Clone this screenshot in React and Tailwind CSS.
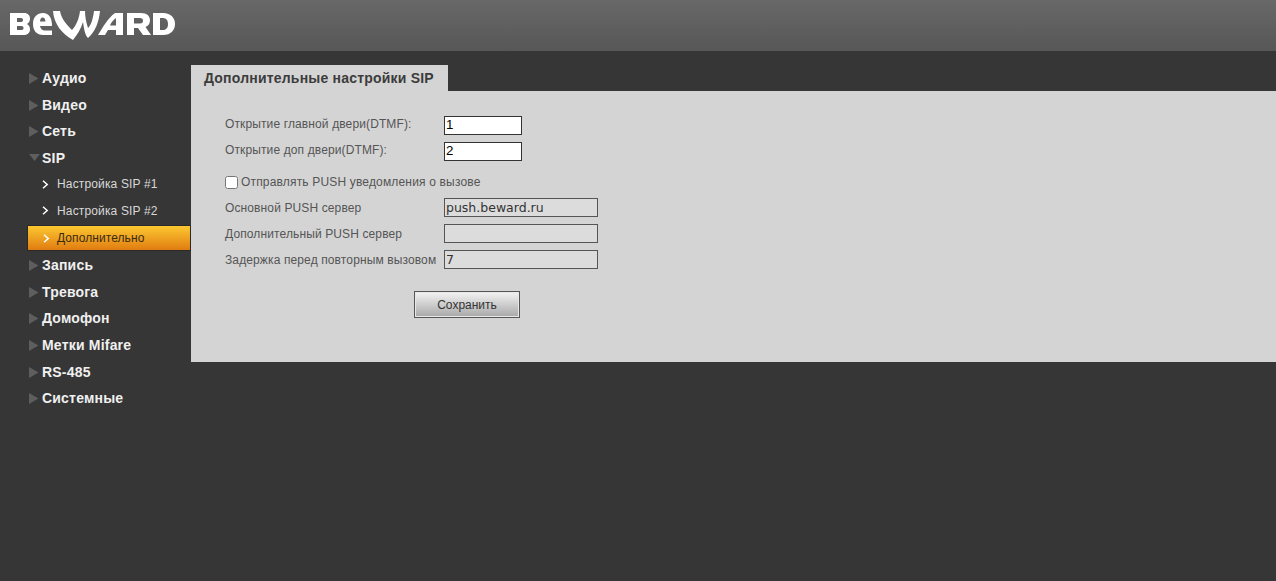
import { useState } from 'react';

function Logo() {
  return (
    <svg width="166" height="32" viewBox="0 0 166 32" fill="#fff" fillRule="evenodd" className="block">
      {/* B */}
      <path d="M0 3H14C18 3 20 5.500 20 8.500C20 11 19 13 17 14C19 15 20 17 20 19.500C20 23 17.500 25 13 25H0ZM7 8V12H11C12.500 12 13 11 13 10C13 9 12.500 8 11 8ZM7 16V20H11.500C13 20 13.500 19 13.500 18C13.500 17 13 16 11.500 16Z" />
      {/* e */}
      <path d="M33 3C39 3 42 8 42 16H30C30.500 18.500 32 20.500 35 20.500H42V25H33C27 25 23 21 23 14C23 7 27 3 33 3ZM30 11.500H35.500C35 9 34.500 7.500 32.700 7.500C31 7.500 30.300 9 30 11.500Z" />
      {/* W */}
      <path d="M43 1C44 14 52 24 63 30C67 25 71 19 73 12C74 19 75 25 78 28C85 22 89 12 90 1H84C83 9 81 15 78 18C76 12 75 6 75 1H70C69 9 66 16 62 20C56 14 51 8 50 1Z" />
      {/* A */}
      <path d="M88 25C93 17 98 8 105 3H113V25H106V20H98L95 25ZM106 15.500V8C103 10 101 13 100 15.500Z" />
      {/* R */}
      <path d="M117 3H131C137 3 140 6 140 10.500C140 14 138 16 135.500 17L141 25H133L128 18H124V25H117ZM124 8V13.500H130C132 13.500 133 12.500 133 10.700C133 9 132 8 130 8Z" />
      {/* D */}
      <path d="M143 3H153C161 3 165 8 165 14C165 20 161 25 153 25H143ZM150 8V20H152.500C156 20 158 18 158 14C158 10 156 8 152.500 8Z" />
    </svg>
  );
}

function Arrow({ open }) {
  return (
    <svg width="11" height="11" viewBox="0 0 11 11" className="shrink-0">
      {open ? <path d="M0 1h11L5.500 8z" fill="#5e5e5e" /> : <path d="M0 0l9.500 5.500L0 11z" fill="#5e5e5e" />}
    </svg>
  );
}

function Chevron() {
  return (
    <svg width="7" height="9" viewBox="0 0 7 9" fill="none" stroke="#fff" strokeWidth="1.5" className="shrink-0">
      <path d="M1 .8 5.200 4.500 1 8.200" />
    </svg>
  );
}

function MenuItem({ label, open }) {
  return (
    <div className="h-[26.7px] flex items-center pl-[29px] gap-[2px]">
      <Arrow open={open} />
      <span className="text-[14px] font-bold text-[#f0f0f0] tracking-[0.2px]">{label}</span>
    </div>
  );
}

function SubItem({ label, active }) {
  return (
    <div
      className={
        active
          ? 'h-[26px] mb-[1px] ml-[27px] flex items-center pl-[15px] gap-[7px] border border-[#2a2a2a] bg-gradient-to-b from-[#fbc830] to-[#e07c10]'
          : 'h-[26.7px] pb-[2px] ml-[27px] flex items-center pl-[15px] gap-[8px]'
      }
    >
      <Chevron />
      <span className={active ? 'text-[12px] text-[#3a2a10] tracking-[0.08px]' : 'text-[12px] text-[#d8d8d8] tracking-[0.15px]'}>{label}</span>
    </div>
  );
}

function Row({ label, value, className }) {
  return (
    <div className={`flex items-center ${className}`}>
      <span className="w-[219px] text-[12px] text-[#555] tracking-[0.12px] whitespace-nowrap">{label}</span>
      <input
        readOnly
        value={value}
        className="w-[154px] h-[19px] border border-[#555] bg-[#dcdcdc] px-[1px] text-[12.5px] text-[#333] outline-none font-['DejaVu_Sans',sans-serif]"
      />
    </div>
  );
}

function DtmfRow({ label, value, className }) {
  return (
    <div className={`flex items-center ${className}`}>
      <span className="w-[219px] pb-[2px] text-[12px] text-[#555] tracking-[0.12px] whitespace-nowrap">{label}</span>
      <input
        readOnly
        value={value}
        className="w-[78px] h-[19px] border border-[#333] bg-white px-[1px] text-[13.3px] text-black outline-none"
      />
    </div>
  );
}

export default function App() {
  const [push, setPush] = useState(false);

  return (
    <div className="h-[581px] overflow-hidden bg-[#363636] font-['Liberation_Sans',Arial,sans-serif]">
      {/* Header */}
      <div className="h-[51px] pl-[10px] pt-[10px] bg-gradient-to-b from-[#686868] to-[#575757]">
        <Logo />
      </div>

      <div className="flex pt-[14px]">
        {/* Menu */}
        <div className="w-[191px] shrink-0">
          <MenuItem label="Аудио" />
          <MenuItem label="Видео" />
          <MenuItem label="Сеть" />
          <MenuItem label="SIP" open />
          <SubItem label="Настройка SIP #1" />
          <SubItem label="Настройка SIP #2" />
          <SubItem label="Дополнительно" active />
          <MenuItem label="Запись" />
          <MenuItem label="Тревога" />
          <MenuItem label="Домофон" />
          <MenuItem label="Метки Mifare" />
          <MenuItem label="RS-485" />
          <MenuItem label="Системные" />
        </div>

        {/* Content */}
        <div className="flex-1">
          <div className="w-[257px] h-[26px] bg-[#d4d4d4] pl-[13px] flex items-center text-[14px] font-bold text-[#3c3c3c] tracking-[0.2px]">
            Дополнительные настройки SIP
          </div>
          <div className="h-[271px] bg-[#d4d4d4] pl-[34px] pt-[24px]">
            <DtmfRow label="Открытие главной двери(DTMF):" value="1" />
            <DtmfRow label="Открытие доп двери(DTMF):" value="2" className="mt-[6px]" />
            <label className="flex items-center mt-[11px] h-[20px] gap-[3px] text-[12px] text-[#555] tracking-[0.17px]">
              <input
                type="checkbox"
                checked={push}
                onChange={(e) => setPush(e.target.checked)}
                className="w-[13px] h-[13px] m-0"
              />
              Отправлять PUSH уведомления о вызове
            </label>
            <Row label="Основной PUSH сервер" value="push.beward.ru" className="mt-[6px]" />
            <Row label="Дополнительный PUSH сервер" value="" className="mt-[7px]" />
            <Row label="Задержка перед повторным вызовом" value="7" className="mt-[7px]" />
            <button className="block ml-[189px] mt-[22px] w-[106px] h-[27px] border border-[#555] shadow-[inset_0_0_0_1px_#e8e8e8] bg-gradient-to-b from-[#f4f4f4] to-[#a8a8a8] text-[12px] text-[#333]">
              Сохранить
            </button>
          </div>
        </div>
      </div>
    </div>
  );
}
